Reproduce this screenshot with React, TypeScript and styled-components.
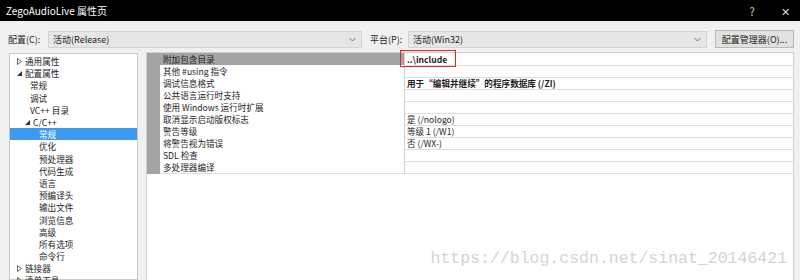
import React from 'react'
import styled, { createGlobalStyle } from 'styled-components'

const GlobalStyle = createGlobalStyle`
  html, body {
    margin: 0;
    padding: 0;
    background: #f0f0f0;
  }
  body {
    font-family: "Microsoft YaHei", "Noto Sans CJK SC", "Noto Sans", sans-serif;
    color: #1e1e1e;
  }
`

const Window = styled.div`
  width: 800px;
  height: 280px;
  overflow: hidden;
  display: flex;
  flex-direction: column;
  background: #f0f0f0;
  position: relative;
`

const TitleBar = styled.div`
  height: 21px;
  flex: none;
  background: #000;
  color: #fff;
  display: flex;
  align-items: center;
  padding-left: 6px;
  font-size: 10px;
`

const Title = styled.div`
  flex: 1;
`

const TitleButton = styled.div<{ $w: number }>`
  width: ${({ $w }) => $w}px;
  text-align: center;
  font-size: 11px;
  color: #d8d8d8;
`

const Toolbar = styled.div`
  display: flex;
  align-items: center;
  height: 18px;
  padding: 9px 6px 0 8px;
  font-size: 9px;
  flex: none;
`

const Label = styled.span<{ $w: number }>`
  width: ${({ $w }) => $w}px;
  flex: none;
`

const Combo = styled.div<{ $w: number }>`
  width: ${({ $w }) => $w}px;
  height: 17px;
  box-sizing: border-box;
  border: 1px solid #d4d4d4;
  background: #e6e6e6;
  display: flex;
  align-items: center;
  padding: 0 5px 0 4px;
  margin-right: 8px;
  flex: none;
`

const ComboText = styled.span`
  flex: 1;
`

const Chevron = styled.svg`
  width: 7px;
  height: 5px;
`

const Button = styled.div`
  height: 18px;
  box-sizing: border-box;
  flex: 1;
  border: 1px solid #b8b8b8;
  background: #e1e1e1;
  display: flex;
  align-items: center;
  justify-content: center;
  font-size: 9px;
`

const Body = styled.div`
  flex: 1;
  display: flex;
  gap: 8px;
  padding: 4px 6px 0 9px;
  min-height: 0;
`

const TreePanel = styled.div`
  width: 129px;
  flex: none;
  box-sizing: border-box;
  border: 1px solid #cacaca;
  background: #fff;
  padding-top: 1px;
  font-size: 8.6px;
  margin-top: 1px;
`

const TreeRow = styled.div<{ $indent: number; $selected?: boolean }>`
  height: 12.2px;
  display: flex;
  align-items: center;
  padding-left: ${({ $indent }) => $indent}px;
  background: ${({ $selected }) => ($selected ? '#3d98f0' : 'transparent')};
  color: ${({ $selected }) => ($selected ? '#fff' : '#1e1e1e')};
`

const Toggle = styled.span`
  width: 8px;
  flex: none;
  display: flex;
  align-items: center;
`

const GridPanel = styled.div`
  flex: 1;
  box-sizing: border-box;
  border: 1px solid #cfcfcf;
  border-bottom: none;
  background: #fff;
  font-size: 8.6px;
`

const Row = styled.div`
  display: grid;
  grid-template-columns: 13px 245px 1fr;
  height: 12px;
`

const Gutter = styled.div`
  background: #a3a3a3;
`

const NameCell = styled.div<{ $selected?: boolean }>`
  box-sizing: border-box;
  border-bottom: 1px solid #dedede;
  border-right: 1px solid #cfcfcf;
  background: ${({ $selected }) => ($selected ? '#a3a3a3' : '#fff')};
  padding-left: 3px;
  display: flex;
  align-items: center;
  white-space: nowrap;
`

const ValueCell = styled.div<{ $bold?: boolean }>`
  position: relative;
  box-sizing: border-box;
  border-bottom: 1px solid #dedede;
  padding-left: 2px;
  display: flex;
  align-items: center;
  font-weight: ${({ $bold }) => ($bold ? 700 : 400)};
  white-space: nowrap;
`

const Marker = styled.div`
  position: absolute;
  left: -5px;
  top: -3px;
  width: 56px;
  height: 17px;
  box-sizing: border-box;
  border: 1.5px solid #e4262b;
`

const Watermark = styled.div`
  position: absolute;
  right: 13px;
  bottom: 12px;
  font-family: "Liberation Mono", monospace;
  font-size: 16.5px;
  color: #d4d4d4;
`

const Collapsed = () => (
  <svg width="5" height="7" viewBox="0 0 5 7">
    <path d="M0.5 0.5 L4.5 3.5 L0.5 6.5 Z" fill="none" stroke="#555" strokeWidth="0.9" />
  </svg>
)

const Expanded = () => (
  <svg width="5" height="5" viewBox="0 0 5 5">
    <path d="M5 0 L5 5 L0 5 Z" fill="#333" />
  </svg>
)

type TreeItem = { label: string; indent: number; toggle?: 'open' | 'closed'; selected?: boolean }

const tree: TreeItem[] = [
  { label: '通用属性', indent: 12, toggle: 'closed' },
  { label: '配置属性', indent: 12, toggle: 'open' },
  { label: '常规', indent: 20 },
  { label: '调试', indent: 20 },
  { label: 'VC++ 目录', indent: 20 },
  { label: 'C/C++', indent: 20, toggle: 'open' },
  { label: '常规', indent: 29, selected: true },
  { label: '优化', indent: 29 },
  { label: '预处理器', indent: 29 },
  { label: '代码生成', indent: 29 },
  { label: '语言', indent: 29 },
  { label: '预编译头', indent: 29 },
  { label: '输出文件', indent: 29 },
  { label: '浏览信息', indent: 29 },
  { label: '高级', indent: 29 },
  { label: '所有选项', indent: 29 },
  { label: '命令行', indent: 29 },
  { label: '链接器', indent: 12, toggle: 'closed' },
  { label: '清单工具', indent: 12, toggle: 'closed' },
]

type Prop = { name: string; value?: string; bold?: boolean; selected?: boolean; marked?: boolean }

const props: Prop[] = [
  { name: '附加包含目录', value: '..\\include', bold: true, selected: true, marked: true },
  { name: '其他 #using 指令' },
  { name: '调试信息格式', value: '用于“编辑并继续”的程序数据库 (/ZI)', bold: true },
  { name: '公共语言运行时支持' },
  { name: '使用 Windows 运行时扩展' },
  { name: '取消显示启动版权标志', value: '是 (/nologo)' },
  { name: '警告等级', value: '等级 1 (/W1)' },
  { name: '将警告视为错误', value: '否 (/WX-)' },
  { name: 'SDL 检查' },
  { name: '多处理器编译' },
]

const DownArrow = () => (
  <Chevron viewBox="0 0 7 5">
    <path d="M0.5 1 L3.5 4 L6.5 1" fill="none" stroke="#777" strokeWidth="1" />
  </Chevron>
)

export default function App() {
  return (
    <Window>
      <GlobalStyle />
      <TitleBar>
        <Title>ZegoAudioLive 属性页</Title>
        <TitleButton $w={36}>?</TitleButton>
        <TitleButton $w={30}>✕</TitleButton>
      </TitleBar>
      <Toolbar>
        <Label $w={40}>配置(C):</Label>
        <Combo $w={314}>
          <ComboText>活动(Release)</ComboText>
          <DownArrow />
        </Combo>
        <Label $w={38}>平台(P):</Label>
        <Combo $w={299}>
          <ComboText>活动(Win32)</ComboText>
          <DownArrow />
        </Combo>
        <Button>配置管理器(O)...</Button>
      </Toolbar>
      <Body>
        <TreePanel>
          {tree.map((item, i) => (
            <TreeRow key={i} $indent={item.toggle ? item.indent - 8 + 3 : item.indent} $selected={item.selected}>
              {item.toggle && <Toggle>{item.toggle === 'open' ? <Expanded /> : <Collapsed />}</Toggle>}
              {item.label}
            </TreeRow>
          ))}
        </TreePanel>
        <GridPanel>
          {props.map((p, i) => (
            <Row key={i}>
              <Gutter />
              <NameCell $selected={p.selected}>{p.name}</NameCell>
              <ValueCell $bold={p.bold}>
                {p.value}
                {p.marked && <Marker />}
              </ValueCell>
            </Row>
          ))}
        </GridPanel>
      </Body>
      <Watermark>https://blog.csdn.net/sinat_20146421</Watermark>
    </Window>
  )
}
